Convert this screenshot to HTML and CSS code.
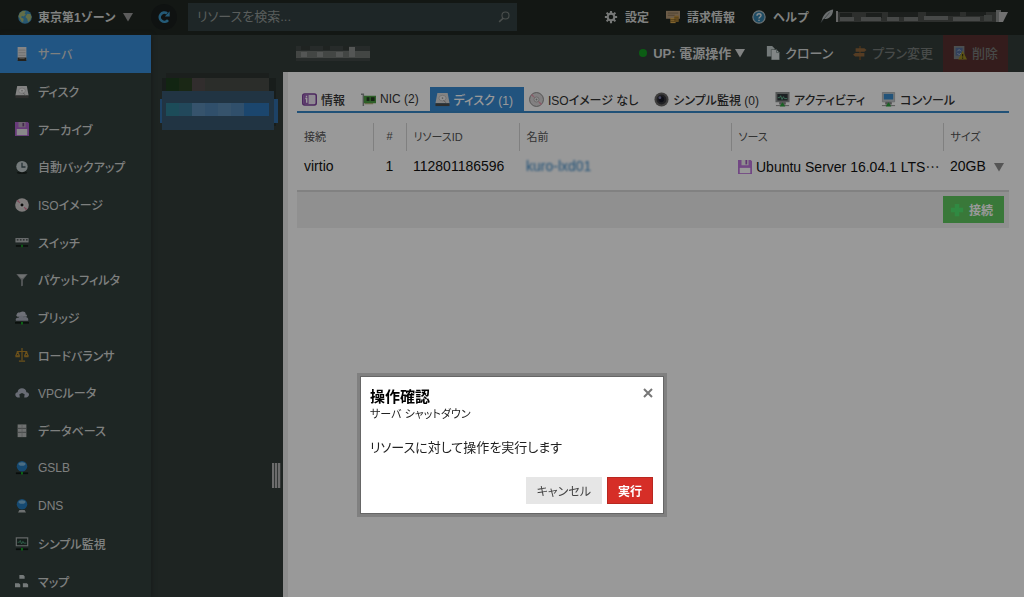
FILE: index.html
```
<!DOCTYPE html>
<html lang="ja">
<head>
    <meta charset="UTF-8">
    <meta name="viewport" content="width=device-width, initial-scale=1.0">
    <title>サーバ - コントロールパネル</title>
    <link rel="stylesheet" href="styles.css">
</head>
<body>
    <!-- Shared icons -->
    <svg class="defs" aria-hidden="true">
        <symbol id="i-globe" viewBox="0 0 16 16"><circle cx="8" cy="8" r="7.8" fill="#4292bd"/><path d="M2 3.5 5.500 .8 9 1.500 7.500 4 9 5.500 6 7.500 4.500 6.500 3.500 8.500 6.500 10 6 13 4.500 14 2 9.500 .5 7ZM10.500 4.500 14 4.500 15.500 8 14 11.500 11.500 14 10.500 10 8.500 8Z" fill="#a5b879"/></symbol>
        <symbol id="i-server" viewBox="0 0 16 16"><path d="M3 0h10v15H3z" fill="#dedede"/><path d="M4 3.500h8M4 6.500h8M4 9.500h8" stroke="#aaa" stroke-width=".8"/><path d="M3 12h10v4H3z" fill="#3d3830"/><path d="M5 12.700h6" stroke="#aaa"/></symbol>
        <symbol id="i-disk" viewBox="0 0 16 16"><path d="M2.500 1h11L15.500 12H.5z" fill="#dadada"/><path d="M.5 12h15v3H.5z" fill="#4c4d4b"/><ellipse cx="8" cy="6.500" rx="3.800" ry="3" fill="#f1f1f1" stroke="#a8a8a8" stroke-width=".6"/><circle cx="8" cy="6.500" r=".9" fill="#999"/><path d="m9 9 3 2.500" stroke="#999"/></symbol>
        <symbol id="i-floppy" viewBox="0 0 16 16"><path d="M0 0h14.500L16 1.500V16H0z" fill="#ad62cc"/><path d="M4 0h8v6H4z" fill="#b9a6bf"/><path d="M8.500 1h2v4h-2z" fill="#70427f"/><path d="M2 8h12v7H2z" fill="#e5e3e6"/></symbol>
        <symbol id="i-floppy-sm" viewBox="0 0 16 16"><path d="M0 0h14.500L16 1.500V16H0z" fill="#bf77dc"/><path d="M4 0h8v6H4z" fill="#eee"/><path d="M8.500 0h2v5h-2z" fill="#a05abe"/><path d="M2 9h12v6H2z" fill="#fff"/></symbol>
        <symbol id="i-clock" viewBox="0 0 16 16"><ellipse cx="8" cy="14.500" rx="6" ry="1.500" fill="#1c2320"/><circle cx="8" cy="7.500" r="6.500" fill="#c1cccd"/><path d="M8 3v5h4" fill="none" stroke="#3f5258" stroke-width="1.500"/></symbol>
        <symbol id="i-cd" viewBox="0 0 16 16"><circle cx="8" cy="8" r="7.800" fill="#d2cece"/><path d="M8 8 2 3.500 3.500 2ZM8 8l6 4.500-1.500 1.500Z" fill="#d47c95"/><circle cx="8" cy="8" r="3" fill="#ddd"/><circle cx="8" cy="8" r="1.700" fill="#111"/></symbol>
        <symbol id="i-cd2" viewBox="0 0 16 16"><circle cx="8" cy="8" r="7.400" fill="#d9d6d7" stroke="#888"/><path d="M8 8 2 3.500 3.500 2ZM8 8l6 4.500-1.500 1.500Z" fill="#e49aae"/><circle cx="8" cy="8" r="2.700" fill="#eee" stroke="#a5a1a2" stroke-width=".8"/><circle cx="8" cy="8" r="1" fill="#999"/></symbol>
        <symbol id="i-switch" viewBox="0 0 16 16"><path d="M.5 3.500h15v5H.5z" fill="#b5b9ba"/><path d="M2 5.500h2M5.500 5.500h2M9 5.500h2M12.500 5.500h2" stroke="#343c3c" stroke-width="1.500"/><path d="M1 12.500h14" stroke="#141b17" stroke-width="2"/><path d="M7 11h2v3H7z" fill="#12a31f"/></symbol>
        <symbol id="i-filter" viewBox="0 0 16 16"><path d="M1.500 1h13L9 8v6.500L7 15V8z" fill="#919598"/><path d="M3 2h10L9 6H7z" fill="#b9bcbd"/></symbol>
        <symbol id="i-bridge" viewBox="0 0 16 16"><path d="M2 4C3 1 5 2 6 1.500 9-.5 13 1 12 4c2 0 2 2 1 2.500H3C1.500 6 1 4.500 2 4Z" fill="#b9bdc8"/><path d="M1 10.500C0 8 3 7 4 8c0-3 5-4 6-1 3-1 6 1 5 4H1Z" fill="#a9adbb"/><path d="M0 13.500h16" stroke="#111914" stroke-width="2"/><path d="M7 12.500h2v3H7z" fill="#12b621"/></symbol>
        <symbol id="i-scale" viewBox="0 0 16 16"><g fill="none" stroke="#b3862c" stroke-width="1.400"><path d="M8 0v14M2 4h12M3 4 1 9M3 4l2 5M13 4l-2 5M13 4l2 5M4.500 15h7"/><path d="M.5 9.500h5M10.500 9.500h5" stroke-width="2.200"/></g></symbol>
        <symbol id="i-cloud" viewBox="0 0 16 16"><path d="M3 13C-1 12 0 7 3 7c0-6 10-6 10 0 4 0 4 5 0 6h-2.500L11 9.500 8 8 5 9.500 5.500 13Z" fill="#b0b5c4"/></symbol>
        <symbol id="i-db" viewBox="0 0 16 16"><path d="M3 .5h10v14.500H3z" fill="#b9bcbc"/><path d="M3 5h10M3 9.500h10" stroke="#676d6d"/><path d="M8 .5v14.500" stroke="#8e9292" stroke-width=".7"/></symbol>
        <symbol id="i-gslb" viewBox="0 0 16 16"><circle cx="8" cy="6" r="6" fill="#247bbd"/><ellipse cx="8" cy="3.500" rx="4" ry="2" fill="#7eb6db"/><path d="M1 14h14" stroke="#0f1713" stroke-width="2"/><path d="M7 12.500h2v3H7z" fill="#12b621"/></symbol>
        <symbol id="i-dns" viewBox="0 0 16 16"><circle cx="8" cy="6" r="6" fill="#247bbd"/><ellipse cx="8" cy="3.500" rx="4" ry="2" fill="#7eb6db"/><path d="M5 12.500h6l1.500 3h-9z" fill="#b6bbbb"/></symbol>
        <symbol id="i-watch" viewBox="0 0 16 16"><path d="M1.500 1h13v9h-13z" fill="#24332e" stroke="#a9afae" stroke-width="1.300"/><path d="M3 6h2l1-2 1.500 4L9 5l1 2h3" fill="none" stroke="#4fa27f"/><path d="M1 14h14" stroke="#0f1713" stroke-width="2"/><path d="M7 12.500h2v3H7z" fill="#12b621"/></symbol>
        <symbol id="i-map" viewBox="0 0 16 16"><g fill="#c3cbcc"><path d="M5 1h4.500L11 2.500V5.500H5zM0 10.500h4.500L6 12v3H0zM9 10.500h4.500L15 12v3H9z"/></g></symbol>
        <symbol id="i-refresh" viewBox="0 0 16 16"><path d="M12.600 11.500A5.300 5.300 0 1 1 11.500 3.800" fill="none" stroke="#3d97c6" stroke-width="3"/><path d="M14.500 1.500v6H9z" fill="#3d97c6"/></symbol>
        <symbol id="i-search" viewBox="0 0 16 16"><circle cx="10" cy="6" r="4.700" fill="none" stroke="#7b8280" stroke-width="1.500"/><path d="m7 9.500-5.500 5" stroke="#7b8280" stroke-width="2"/></symbol>
        <symbol id="i-gear" viewBox="0 0 16 16"><circle cx="8" cy="8" r="3.800" fill="none" stroke="#c5c8c6" stroke-width="2.400"/><path d="M8 1v3M8 12v3M1 8h3M12 8h3M3 3l2.300 2.300M10.700 10.700 13 13M13 3l-2.300 2.300M5.300 10.700 3 13" stroke="#c5c8c6" stroke-width="2.400"/></symbol>
        <symbol id="i-bill" viewBox="0 0 16 16"><path d="M0 1h16v9H0z" fill="#b59a78"/><path d="M2 3.500h12M2 6h8" stroke="#806b50"/><path d="M5 9h6v6H5z" fill="#d9a94d"/><path d="M9.500 6.500h5v7h-5z" fill="#bb8c3a"/><path d="M5 11h6M5 13h6M9.500 9h5M9.500 11.500h5" stroke="#765821" stroke-width=".8"/></symbol>
        <symbol id="i-help" viewBox="0 0 16 16"><circle cx="8" cy="8" r="7" fill="#337fa9" stroke="#b5c1c4" stroke-width="1.300"/><path d="M5.700 6.500C5.700 3.500 10.500 3.500 10.300 6.300 10.200 8 8 8 8 9.800M8 11v1.700" fill="none" stroke="#e4eaeb" stroke-width="1.600"/></symbol>
        <symbol id="i-feather" viewBox="0 0 16 16"><path d="M1.500 15.500C3 6 8 2 15 .5 15 7 11 12 3.500 11.500Z" fill="#b4babb"/><path d="M1 15.500 11 4" stroke="#505a5b" stroke-width=".8"/></symbol>
        <symbol id="i-clone" viewBox="0 0 16 16"><path d="M1 0h6l2.500 2.500V12H1z" fill="#c1cccb"/><path d="M6 4h6l3.500 3.500V16H6z" fill="#d9e0df" stroke="#53605d" stroke-width=".6"/><path d="M12 4v3.500h3.500" fill="none" stroke="#83918f"/></symbol>
        <symbol id="i-sign" viewBox="0 0 16 16"><path d="M7 0h2v16H7z" fill="#6e4f2b"/><path d="M3 2.500h10l2.500 2L13 6.500H3zM2.500 8H13v4H2.500L0 10z" fill="#8e653b"/></symbol>
        <symbol id="i-delete" viewBox="0 0 16 16"><path d="M1 0h12v15H1z" fill="#7f8486"/><path d="M3 2h8v9H3z" fill="#536d9a"/><path d="m5 6 2-2 2 2M9 8 7 10 5 8" stroke="#b2bdcc" fill="none"/><path d="M11 5.500 16 15.500H6z" fill="#9c8b24"/><path d="M11 9v3M11 13v1.500" stroke="#352f14" stroke-width="1.300"/></symbol>
        <symbol id="i-info" viewBox="0 0 16 16"><rect x=".8" y="2.200" width="14.400" height="11.600" rx="2" fill="#efe6f3" stroke="#7e419d" stroke-width="1.600"/><path d="M1.500 3h5.500v10H1.500z" fill="#995fb5"/><path d="M3.500 7h1.500v4.500M4.800 4v1.500" stroke="#fff" stroke-width="1.500" fill="none"/></symbol>
        <symbol id="i-nic" viewBox="0 0 16 16"><path d="M0 2.500h2.500V15" fill="none" stroke="#8d9191" stroke-width="1.600"/><path d="M3 4h13v8H3z" fill="#4e9e43"/><path d="M6 5.500h3v4H6zM10.500 5.500h4v4h-4z" fill="#253d22"/><path d="M4 12.500h9" stroke="#9a9a58"/></symbol>
        <symbol id="i-lens" viewBox="0 0 16 16"><circle cx="8" cy="8" r="7.500" fill="#6a6867"/><circle cx="8" cy="8" r="5.300" fill="#36363b"/><circle cx="7.800" cy="7.800" r="3" fill="#181925"/><circle cx="6.300" cy="6" r="1.500" fill="#7779a5"/></symbol>
        <symbol id="i-activity" viewBox="0 0 16 16"><path d="M1.500 1h13v9h-13z" fill="#30383b" stroke="#8e9292" stroke-width="2"/><path d="M3 6h2l1-2 1.500 4L9 5l1 2h3" fill="none" stroke="#65b995"/><path d="M5 11h6v2H5zM1 14.500h14" fill="#888" stroke="#8d8d8d"/><path d="m8 11 3 4.500H5z" fill="#29a33b"/></symbol>
        <symbol id="i-console" viewBox="0 0 16 16"><path d="M1.500 .5h13v10h-13z" fill="#c5c9cb" stroke="#b0b4b6"/><path d="M3 2h10v6H3z" fill="#398bcb"/><path d="M5 11h6v2H5zM1 14.500h14" fill="#888" stroke="#8d8d8d"/><path d="m8 11 3 4.500H5z" fill="#29a33b"/></symbol>
        <symbol id="i-plus" viewBox="0 0 16 16"><path d="M5.500 1h5v4.500H15v5h-4.500V15h-5v-4.500H1v-5h4.500z" fill="#50e66e"/></symbol>
        <symbol id="i-down" viewBox="0 0 16 16"><path d="M0 1.500h16l-8 13.500z" fill="currentColor"/></symbol>
    </svg>

    <div class="app">
        <header class="header">
            <button class="zone"><svg class="icon"><use href="#i-globe"/></svg>東京第1ゾーン<svg class="arrow"><use href="#i-down"/></svg></button>
            <button class="refresh" aria-label="更新"><svg class="icon"><use href="#i-refresh"/></svg></button>
            <form class="search">
                <input type="text" placeholder="リソースを検索..." aria-label="リソースを検索">
                <svg class="icon"><use href="#i-search"/></svg>
            </form>
            <nav class="header-menu">
                <a href="#"><svg class="icon"><use href="#i-gear"/></svg>設定</a>
                <a href="#"><svg class="icon"><use href="#i-bill"/></svg>請求情報</a>
                <a href="#"><svg class="icon"><use href="#i-help"/></svg>ヘルプ</a>
                <button class="account" aria-label="アカウント">
                    <svg class="icon"><use href="#i-feather"/></svg>
                    <svg class="account-name" viewBox="0 0 172 16">
                        <path d="M0 2h2v11H0z" fill="#aaa"/>
                        <path d="M2 3h162v10H2z" fill="#4b4f4c"/>
                        <path d="M4 4h12v5H4zM30 4h16v5H30zM52 3h30v5H52zM90 3h34v4H90zM130 3h20v4h-20z" fill="#303431"/>
                        <path d="M4 8h14v4H4zM25 8h20v4H25zM51 8h12v4H51zM68 8h14v4H68zM88 7h24v4H88zM117 8h27v4h-27z" fill="#777b78"/>
                        <path d="M148 6h8v6h-8z" fill="#656966"/>
                        <path d="M160 1h5v12h-5z" fill="#8e928f"/>
                        <path d="M163 3h9l-5 10h-4z" fill="#bbb"/>
                    </svg>
                </button>
            </nav>
        </header>

        <div class="body">
            <nav class="sidebar">
                <a class="active" href="#"><svg class="icon"><use href="#i-server"/></svg>サーバ</a>
                <a href="#"><svg class="icon"><use href="#i-disk"/></svg>ディスク</a>
                <a href="#"><svg class="icon"><use href="#i-floppy"/></svg>アーカイブ</a>
                <a href="#"><svg class="icon"><use href="#i-clock"/></svg>自動バックアップ</a>
                <a href="#"><svg class="icon"><use href="#i-cd"/></svg>ISOイメージ</a>
                <a href="#"><svg class="icon"><use href="#i-switch"/></svg>スイッチ</a>
                <a href="#"><svg class="icon"><use href="#i-filter"/></svg>パケットフィルタ</a>
                <a href="#"><svg class="icon"><use href="#i-bridge"/></svg>ブリッジ</a>
                <a href="#"><svg class="icon"><use href="#i-scale"/></svg>ロードバランサ</a>
                <a href="#"><svg class="icon"><use href="#i-cloud"/></svg>VPCルータ</a>
                <a href="#"><svg class="icon"><use href="#i-db"/></svg>データベース</a>
                <a href="#"><svg class="icon"><use href="#i-gslb"/></svg>GSLB</a>
                <a href="#"><svg class="icon"><use href="#i-dns"/></svg>DNS</a>
                <a href="#"><svg class="icon"><use href="#i-watch"/></svg>シンプル監視</a>
                <a href="#"><svg class="icon"><use href="#i-map"/></svg>マップ</a>
            </nav>

            <section class="list">
                <svg class="list-item" viewBox="0 0 118 60" shape-rendering="crispEdges">
                    <path d="M6 3h103v56H6z" fill="#2d3531"/>
                    <path d="M2 8h114v48H2z" fill="#28312e"/>
                    <path d="M6 8h13v13H6z" fill="#1f3e1e"/><path d="M19 8h13v13H19z" fill="#2c4223"/>
                    <path d="M32 8h13v13H32z" fill="#524c4b"/><path d="M45 8h64v13H45z" fill="#484b46"/>
                    <path d="M0 29h118v24H0z" fill="#38669a"/>
                    <path d="M2 21h112v39H2z" fill="#375770"/>
                    <path d="M6 33h13v13H6z" fill="#307f95"/><path d="M19 33h13v13H19z" fill="#397898"/>
                    <path d="M32 33h52v13H32z" fill="#5b8bb5"/><path d="M45 33h13v13H45zM71 33h13v13H71z" fill="#5184b3"/>
                    <path d="M84 33h25v13H84z" fill="#2e76b7"/>
                    <path d="M0 29h2v24H0zM114 29h4v24h-4z" fill="#316eab"/>
                </svg>
                <div class="handle"></div>
            </section>

            <main class="detail">
                <div class="toolbar">
                    <svg class="name" viewBox="0 0 80 18" shape-rendering="crispEdges">
                        <path d="M1 2h74v15H1z" fill="#424946"/>
                        <path d="M1 7h74v7H1z" fill="#717572"/>
                        <path d="M6 8h6v5H6zM22 8h6v5h-6zM41 8h7v5h-7zM54 3h6v10h-6z" fill="#8d908e"/>
                        <path d="M6 2h9v4H6zM28 2h7v4h-7zM48 2h6v4h-6z" fill="#343b38"/>
                    </svg>
                    <button class="power"><span class="dot"></span>UP: 電源操作<svg class="arrow"><use href="#i-down"/></svg></button>
                    <button><svg class="icon"><use href="#i-clone"/></svg>クローン</button>
                    <button class="off" disabled><svg class="icon"><use href="#i-sign"/></svg>プラン変更</button>
                    <button class="off delete" disabled><svg class="icon"><use href="#i-delete"/></svg>削除</button>
                </div>

                <div class="panel">
                    <nav class="tabs">
                        <a href="#"><svg class="icon"><use href="#i-info"/></svg>情報</a>
                        <a href="#"><svg class="icon"><use href="#i-nic"/></svg>NIC (2)</a>
                        <a class="active" href="#"><svg class="icon"><use href="#i-disk"/></svg>ディスク (1)</a>
                        <a href="#"><svg class="icon"><use href="#i-cd2"/></svg>ISOイメージ なし</a>
                        <a href="#"><svg class="icon"><use href="#i-lens"/></svg>シンプル監視 (0)</a>
                        <a href="#"><svg class="icon"><use href="#i-activity"/></svg>アクティビティ</a>
                        <a href="#"><svg class="icon"><use href="#i-console"/></svg>コンソール</a>
                    </nav>

                    <table class="disks">
                        <thead>
                            <tr>
                                <th class="col-if">接続</th>
                                <th class="col-no">#</th>
                                <th class="col-id">リソースID</th>
                                <th>名前</th>
                                <th>ソース</th>
                                <th class="col-size">サイズ</th>
                            </tr>
                        </thead>
                        <tbody>
                            <tr>
                                <td>virtio</td>
                                <td class="col-no">1</td>
                                <td>112801186596</td>
                                <td><a class="masked" href="#">kuro-lxd01</a></td>
                                <td><svg class="icon"><use href="#i-floppy-sm"/></svg>Ubuntu Server 16.04.1 LTS⋯</td>
                                <td class="col-size">20GB<svg class="arrow"><use href="#i-down"/></svg></td>
                            </tr>
                        </tbody>
                    </table>
                    <div class="table-foot">
                        <button class="connect"><svg class="icon"><use href="#i-plus"/></svg>接続</button>
                    </div>
                </div>
            </main>
        </div>
    </div>

    <!-- Confirm dialog -->
    <div class="overlay">
        <dialog class="dialog" open aria-labelledby="dialog-title">
            <div class="dialog-head">
                <h1 id="dialog-title">操作確認</h1>
                <button class="close" aria-label="閉じる"><svg viewBox="0 0 10 10"><path d="m1 1 8 8M9 1 1 9" stroke="#777" stroke-width="2"/></svg></button>
            </div>
            <p class="sub">サーバ シャットダウン</p>
            <p class="message">リソースに対して操作を実行します</p>
            <div class="actions">
                <button class="cancel">キャンセル</button>
                <button class="run">実行</button>
            </div>
        </dialog>
    </div>
</body>
</html>
```

FILE: styles.css
```
* {
    box-sizing: border-box;
}
body {
    margin: 0;
    font-family: "Liberation Sans", "Noto Sans CJK JP", sans-serif;
    font-size: 12px;
    color: #333;
    background: #323c39;
    overflow: hidden;
}
button, input {
    font: inherit;
    color: inherit;
    border: none;
    background: none;
    padding: 0;
    margin: 0;
}
button {
    cursor: pointer;
}
a {
    color: inherit;
    text-decoration: none;
}
.defs {
    display: none;
}
.icon {
    width: 14px;
    height: 14px;
    flex: none;
}
.arrow {
    width: 12px;
    height: 10px;
    flex: none;
}
.app {
    display: flex;
    flex-direction: column;
    height: 100vh;
}

/* header */
.header {
    display: flex;
    align-items: center;
    flex: none;
    height: 35px;
    padding: 0 16px 2px 18px;
    background: #202722;
    color: #d5d8d6;
    font-weight: bold;
}
.zone {
    display: flex;
    align-items: center;
    gap: 6px;
    width: 133px;
}
.zone .arrow {
    color: #9a9a9a;
}
.refresh {
    display: flex;
    align-items: center;
    justify-content: center;
    width: 26px;
    height: 26px;
    margin-right: 11px;
    border-radius: 50%;
    background: #191e1d;
}
.search {
    display: flex;
    align-items: center;
    flex: 0 1 329px;
    height: 28px;
    padding: 0 7px 0 9px;
    background: #334041;
}
.search input {
    flex: 1;
    min-width: 0;
    font-size: 13px;
    font-weight: normal;
    font-feature-settings: "palt";
}
.search input::placeholder {
    color: #949b99;
}
.search .icon {
    width: 12px;
}
.header-menu {
    display: flex;
    align-items: center;
    gap: 17px;
    margin-left: auto;
}
.header-menu a {
    display: flex;
    align-items: center;
    gap: 7px;
}
.account {
    display: flex;
    gap: 2px;
    margin-left: -6px;
}
.account-name {
    width: 172px;
    height: 16px;
}

/* sidebar */
.body {
    display: flex;
    flex: 1;
    min-height: 0;
}
.sidebar {
    flex: none;
    width: 151px;
    background: #33403d;
    box-shadow: 1px 0 4px #262e2c;
    font-feature-settings: "palt";
}
.sidebar a {
    display: flex;
    align-items: center;
    gap: 9px;
    height: 38px;
    padding: 0 0 1px 15px;
    color: #d2d5d4;
    font-weight: 500;
}
.sidebar a:nth-child(3n) {
    height: 37px;
}
.sidebar .active {
    background: #378edb;
}

/* server list */
.list {
    display: flex;
    flex-direction: column;
    justify-content: space-between;
    flex: none;
    width: 132px;
    padding: 35px 2px 109px 9px;
}
.list-item {
    width: 118px;
    height: 60px;
}
.handle {
    align-self: flex-end;
    width: 9px;
    height: 25px;
    background: repeating-linear-gradient(90deg, #b5b5b5 0, #b5b5b5 2px, #555c5a 2px, #555c5a 3px);
}

/* detail */
.detail {
    display: flex;
    flex-direction: column;
    flex: 1;
    min-width: 0;
}
.toolbar {
    display: flex;
    flex: none;
    height: 37px;
    padding: 0 16px 0 12px;
    color: #d8dbda;
    font-size: 13px;
    font-weight: 500;
    font-feature-settings: "palt";
}
.toolbar .name {
    width: 80px;
    height: 18px;
    margin: 9px auto 0 0;
}
.toolbar button {
    display: flex;
    align-items: center;
    gap: 5px;
    padding: 0 10px 2px;
}
.toolbar .power {
    font-weight: bold;
    gap: 3px;
}
.dot {
    width: 8px;
    height: 8px;
    margin-right: 3px;
    border-radius: 50%;
    background: #149c22;
}
.toolbar .off {
    color: #777c7a;
}
.toolbar .delete {
    background: #58302f;
}
.panel {
    flex: 1;
    padding: 15px 15px 0 9px;
    border-left: 5px solid #ececec;
    background: #fff;
}
.tabs {
    display: flex;
    border-bottom: 2px solid #3787c6;
    font-weight: 500;
    font-feature-settings: "palt";
}
.tabs a {
    display: flex;
    align-items: center;
    gap: 4px;
    height: 24px;
    padding: 0 11px 0 5px;
    white-space: nowrap;
}
.tabs .icon {
    width: 15px;
    height: 15px;
}
.tabs .active {
    background: #378ad2;
    color: #fff;
}
.disks {
    width: 100%;
    margin-top: 10px;
    table-layout: fixed;
    border-collapse: collapse;
}
.disks th {
    height: 28px;
    padding: 0 7px 2px;
    border-left: 1px solid #d5d5d5;
    color: #555;
    font-size: 11px;
    font-weight: normal;
    text-align: left;
    font-feature-settings: "palt";
}
.disks th:first-child {
    border-left: none;
}
.disks td {
    height: 39px;
    padding: 0 7px 9px;
    color: #111;
    font-size: 14px;
    white-space: nowrap;
}
.disks .col-if {
    width: 76px;
}
.disks .col-no {
    width: 33px;
    text-align: center;
}
.disks .col-id {
    width: 113px;
}
.disks .col-size {
    width: 66px;
    padding-right: 0;
}
.disks .icon {
    margin-right: 4px;
    vertical-align: -2px;
}
.disks .arrow {
    margin-left: 7px;
    color: #8e8e8e;
    vertical-align: -1px;
}
.masked {
    color: #3585c4;
    filter: blur(1px);
}
.table-foot {
    display: flex;
    justify-content: flex-end;
    padding: 4px 5px 5px;
    border-top: 2px solid #d8d8d8;
    background: #f0f0f0;
}
.connect {
    display: flex;
    align-items: center;
    gap: 5px;
    height: 27px;
    padding: 0 11px 0 7px;
    background: #5fc960;
    color: #fff;
    font-weight: bold;
}

/* confirm dialog */
.overlay {
    position: fixed;
    inset: 0;
    display: flex;
    align-items: flex-end;
    justify-content: center;
    padding-bottom: 84px;
    background: rgba(0, 0, 0, 0.4);
}
.dialog {
    position: static;
    width: 302px;
    margin: 0;
    padding: 11px 10px 9px 9px;
    border: none;
    background: #fff;
    color: #222;
    box-shadow: 0 0 0 1px #666, 0 0 0 4px #808080;
    font-feature-settings: "palt";
}
.dialog-head {
    display: flex;
    justify-content: space-between;
    align-items: flex-start;
}
.dialog h1 {
    margin: 0;
    color: #000;
    font-size: 15px;
    line-height: 18px;
}
.close {
    display: flex;
}
.close svg {
    width: 10px;
    height: 10px;
}
.dialog p {
    margin: 0;
}
.dialog .sub {
    font-size: 11px;
    line-height: 16px;
}
.dialog .message {
    margin: 17px 0 20px;
    font-size: 13px;
    line-height: 18px;
}
.actions {
    display: flex;
    justify-content: flex-end;
    gap: 5px;
}
.actions button {
    height: 27px;
    padding: 0 11px;
    font-feature-settings: "palt";
}
.cancel {
    background: #e6e6e6;
    color: #444;
}
.actions .run {
    padding: 0 10px;
    border: 1px solid #b82720;
    background: #d62e27;
    color: #fff;
    font-weight: bold;
}
```
